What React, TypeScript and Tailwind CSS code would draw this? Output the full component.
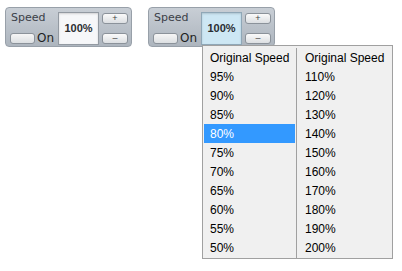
import React from 'react';

const left = ['Original Speed', '95%', '90%', '85%', '80%', '75%', '70%', '65%', '60%', '55%', '50%'];
const right = ['Original Speed', '110%', '120%', '130%', '140%', '150%', '160%', '170%', '180%', '190%', '200%'];

function SmallButton({ label }: { label?: string }) {
  return (
    <div className="flex h-[11px] w-[26px] items-center justify-center rounded-[3px] border border-[#8b929a] bg-gradient-to-b from-[#fafafa] to-[#dcdfe2] text-[9px] leading-none text-[#444]">
      {label}
    </div>
  );
}

function SpeedPanel({ active = false, children }: { active?: boolean; children?: React.ReactNode }) {
  return (
    <div className="relative flex h-[40px] w-[127px] rounded-[4px] border border-[#98a0a9] bg-gradient-to-b from-[#c8ced5] to-[#adb5be]">
      <div className="flex w-[52px] flex-col pl-[4px] pt-[3px]">
        <span className="pl-[1px] text-[11px] leading-[14px] text-[#3b4047]" style={{ fontFamily: '"DejaVu Sans", sans-serif' }}>
          Speed
        </span>
        <div className="mt-[7px] flex items-center">
          <div className="h-[11px] w-[25px] rounded-[3px] border border-[#8b929a] bg-gradient-to-b from-[#f6f6f6] to-[#dcdfe2]" />
          <span className="ml-[2px] text-[12px] leading-[12px] text-[#1e1e1e]" style={{ fontFamily: '"DejaVu Sans", sans-serif' }}>
            On
          </span>
        </div>
      </div>
      <div
        className={`mt-[4px] flex h-[33px] w-[41px] items-center justify-center border shadow-[inset_0_1px_2px_rgba(0,0,0,0.15)] ${
          active ? 'border-[#8fa7b7] bg-[#cde7f4]' : 'border-[#939aa2] bg-[#f6f7f9]'
        }`}
      >
        <span className="text-[11px] font-bold text-[#2a2d31]" style={{ fontFamily: '"Liberation Sans", Arial, sans-serif' }}>
          100%
        </span>
      </div>
      <div className="ml-[3px] mt-[5px] flex flex-col gap-[9px]">
        <SmallButton label="+" />
        <SmallButton label="–" />
      </div>
      {children}
    </div>
  );
}

export default function App() {
  return (
    <div className="h-[271px] w-[402px] bg-white" style={{ fontFamily: '"Liberation Sans", Arial, sans-serif' }}>
      <div className="flex gap-[16px] pl-[5px] pt-[7px]">
        <SpeedPanel />
        <SpeedPanel active>
          <div className="absolute left-[53px] top-[37px] z-10 flex h-[214px] w-[191px] border border-[#a0a0a0] bg-[#f0f0f0] pt-[2px]">
            <div className="flex w-[93px] flex-col px-[1px]">
              {left.map((t) => (
                <div
                  key={t}
                  className={`flex h-[19px] items-center pl-[6px] text-[12px] ${t === '80%' ? 'bg-[#3399ff] text-white' : 'text-black'}`}
                >
                  {t}
                </div>
              ))}
            </div>
            <div className="h-[210px] w-[1px] bg-[#a0a0a0]" />
            <div className="flex flex-1 flex-col pl-[8px]">
              {right.map((t) => (
                <div key={t} className="flex h-[19px] items-center text-[12px] text-black">
                  {t}
                </div>
              ))}
            </div>
          </div>
        </SpeedPanel>
      </div>
    </div>
  );
}
